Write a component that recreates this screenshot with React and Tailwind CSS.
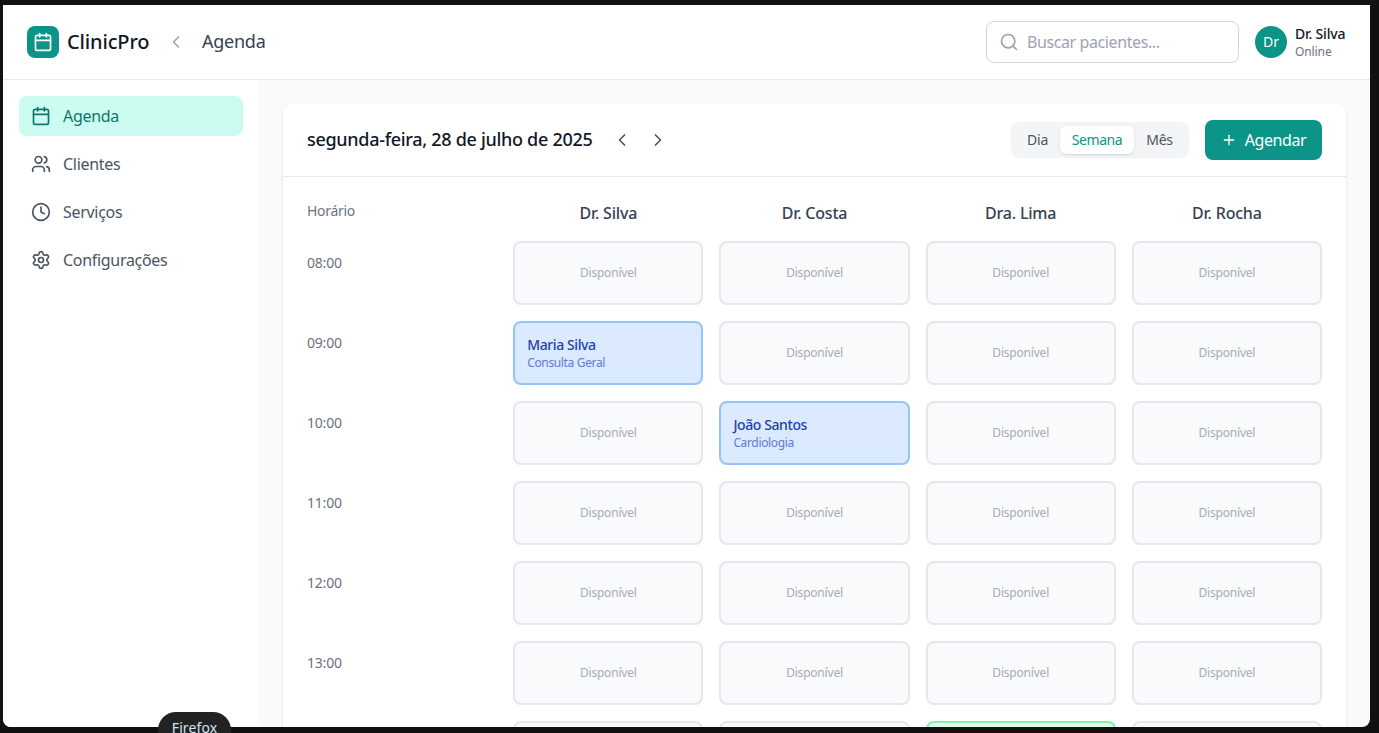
import React from 'react';
import { Calendar, ChevronLeft, ChevronRight, Clock, Plus, Search, Settings, Users } from 'lucide-react';

const doctors = ['Dr. Silva', 'Dr. Costa', 'Dra. Lima', 'Dr. Rocha'];
const times = ['08:00', '09:00', '10:00', '11:00', '12:00', '13:00'];

const appointments = {
  '09:00-0': { name: 'Maria Silva', type: 'Consulta Geral' },
  '10:00-1': { name: 'João Santos', type: 'Cardiologia' },
};

const nav = [
  { label: 'Agenda', icon: Calendar, active: true },
  { label: 'Clientes', icon: Users },
  { label: 'Serviços', icon: Clock },
  { label: 'Configurações', icon: Settings },
];

const Slot = ({ time, col }) => {
  const appt = appointments[`${time}-${col}`];
  if (appt) {
    return (
      <div className="h-16 rounded-lg border-2 border-[#93c5fd] bg-[#dbeafe] p-3">
        <p className="text-sm leading-5 font-medium tracking-[-0.4px] text-[#1e40af]">{appt.name}</p>
        <p className="text-xs leading-4 tracking-[-0.35px] text-[#6478d8]">{appt.type}</p>
      </div>
    );
  }
  return (
    <div className="flex h-16 items-center justify-center rounded-lg border-2 border-[#e5e7eb] bg-[#f9fafb]">
      <span className="text-xs tracking-[-0.2px] text-[#a6abb5]">Disponível</span>
    </div>
  );
};

const App = () => {
  return (
    <div className="relative h-screen overflow-hidden bg-[#111111] pt-[5px] pr-[9px] pb-[6px] pl-[3px] font-['Noto_Sans',sans-serif]">
      <div className="flex h-full flex-col overflow-hidden rounded-b-lg bg-[#f9fafb]">
        <header className="flex h-[75px] shrink-0 items-center justify-between border-b border-[#e5e7eb] bg-white px-6">
          <div className="flex items-center">
            <div className="flex h-8 w-8 items-center justify-center rounded-lg bg-[#0d9488] text-white">
              <Calendar size={20} />
            </div>
            <span className="ml-2 w-[83px] text-xl font-medium tracking-[-0.15px] whitespace-nowrap text-[#111827]">ClinicPro</span>
            <ChevronLeft size={20} className="ml-4 text-[#9ca3af]" />
            <span className="mb-0.5 ml-4 text-lg tracking-[-0.25px] text-[#374151]">Agenda</span>
          </div>
          <div className="flex items-center gap-4">
            <div className="flex h-[42px] w-[253px] items-center gap-2 rounded-lg border border-[#d1d5db] px-3">
              <Search size={20} className="text-[#9ca3af]" />
              <span className="text-base tracking-[-0.4px] text-[#9ca3af]">Buscar pacientes...</span>
            </div>
            <div className="flex w-[91px] items-center gap-2">
              <div className="flex h-8 w-8 shrink-0 items-center justify-center rounded-full bg-[#0d9488] text-sm text-white">Dr</div>
              <div>
                <p className="text-sm leading-5 font-medium tracking-[-0.2px] whitespace-nowrap text-[#111827]">Dr. Silva</p>
                <p className="text-xs leading-4 tracking-[-0.1px] text-[#6b7280]">Online</p>
              </div>
            </div>
          </div>
        </header>

        <div className="flex min-h-0 flex-1">
          <aside className="flex w-64 shrink-0 flex-col gap-2 bg-white p-4">
            {nav.map(({ label, icon: Icon, active }) => (
              <div
                key={label}
                className={`flex h-10 items-center gap-3 rounded-lg px-3 ${active ? 'bg-[#ccfbf1] text-[#0f766e]' : 'text-[#4b5563]'}`}
              >
                <Icon size={20} />
                <span className="text-base tracking-[-0.3px]">{label}</span>
              </div>
            ))}
          </aside>

          <main className="min-w-0 flex-1 px-6 pt-6">
            <section className="rounded-lg bg-white shadow-sm">
              <div className="flex items-center justify-between border-b border-[#e5e7eb] px-6 py-4">
                <div className="flex items-center">
                  <h2 className="mb-0.5 w-[285px] text-lg font-medium tracking-[-0.3px] whitespace-nowrap text-[#111827]">segunda-feira, 28 de julho de 2025</h2>
                  <ChevronLeft size={20} className="ml-5 text-[#4b5563]" />
                  <ChevronRight size={20} className="ml-4 text-[#4b5563]" />
                </div>
                <div className="flex items-center gap-4">
                  <div className="flex h-9 items-center rounded-lg bg-[#f3f4f6] p-1 text-sm text-[#4b5563]">
                    <span className="w-[45px] text-center tracking-[-0.2px]">Dia</span>
                    <span className="flex h-7 w-[74px] items-center justify-center rounded-md bg-white tracking-[-0.4px] text-[#0d9488] shadow-sm">Semana</span>
                    <span className="w-[51px] text-center tracking-[-0.2px]">Mês</span>
                  </div>
                  <button className="flex h-10 w-[117px] items-center justify-center gap-2 rounded-lg bg-[#0d9488] text-base tracking-[-0.4px] text-white">
                    <Plus size={16} />
                    Agendar
                  </button>
                </div>
              </div>

              <div className="grid grid-cols-5 gap-4 p-6">
                <div className="h-6 text-sm tracking-[-0.3px] text-[#6b7280]">Horário</div>
                {doctors.map((d) => (
                  <div key={d} className="text-center text-base font-medium tracking-[-0.2px] text-[#374151]">{d}</div>
                ))}
                {times.map((t) => (
                  <React.Fragment key={t}>
                    <div className="pt-3 text-sm tracking-[-0.2px] text-[#6b7280]">{t}</div>
                    {doctors.map((d, col) => (
                      <Slot key={d} time={t} col={col} />
                    ))}
                  </React.Fragment>
                ))}
                {/* the 14:00 row, only its top edge is on screen */}
                <div />
                <div className="h-16 rounded-lg border-2 border-[#e5e7eb] bg-[#f9fafb]" />
                <div className="h-16 rounded-lg border-2 border-[#e5e7eb] bg-[#f9fafb]" />
                <div className="h-16 rounded-lg border-2 border-[#86efac] bg-[#dcfce7]" />
                <div className="h-16 rounded-lg border-2 border-[#e5e7eb] bg-[#f9fafb]" />
              </div>
            </section>
          </main>
        </div>
      </div>

      <div className="absolute top-[712px] left-[158px] h-10 w-[73px] rounded-[18px] bg-[#222222] pt-1.5 text-center text-sm tracking-[0.1px] text-[#cfe3f5]">Firefox</div>
    </div>
  );
};

export default App;
